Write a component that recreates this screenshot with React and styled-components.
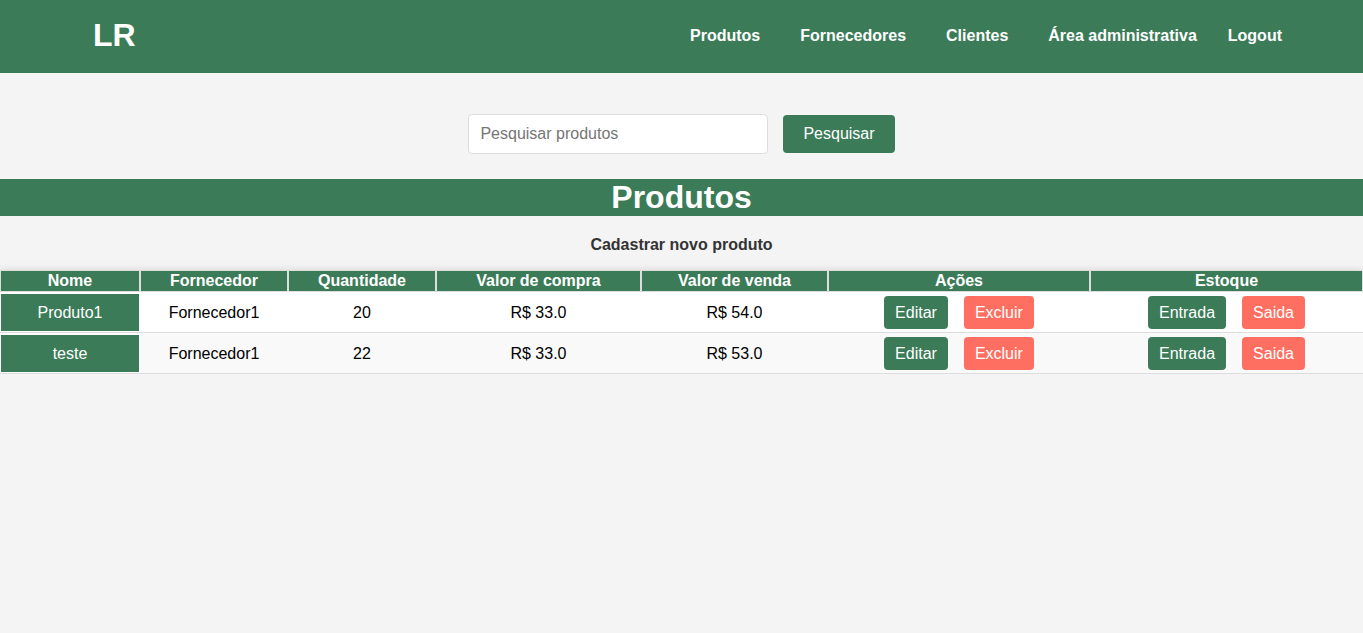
import styled, { createGlobalStyle } from "styled-components";

const GREEN = "#3b7b58";
const RED = "#ff6f61";

const GlobalStyle = createGlobalStyle`
  html, body {
    margin: 0;
    padding: 0;
    background: #f4f4f4;
    font-family: "Liberation Sans", Arial, sans-serif;
  }
`;

const Header = styled.header`
  background: ${GREEN};
  height: 73px;
  display: flex;
  align-items: center;
  justify-content: space-between;
  padding: 0 71px 0 93px;
  box-sizing: border-box;
`;

const Logo = styled.div`
  color: #fff;
  font-size: 32px;
  font-weight: bold;
  margin-top: -3px;
`;

const Nav = styled.nav`
  display: flex;
  align-items: center;
  margin-top: -1px;
`;

const NavLink = styled.a`
  color: #fff;
  font-size: 16px;
  font-weight: bold;
  text-decoration: none;
  margin-left: 40px;
  cursor: pointer;
`;

const LogoutButton = styled.button`
  background: none;
  border: none;
  color: #fff;
  font-family: inherit;
  font-size: 16px;
  font-weight: bold;
  padding: 0 10px;
  margin-left: 21px;
  cursor: pointer;
`;

const SearchForm = styled.form`
  display: flex;
  justify-content: center;
  align-items: center;
  gap: 15px;
  padding: 41px 0 25px;
`;

const SearchInput = styled.input`
  width: 300px;
  height: 40px;
  box-sizing: border-box;
  border: 1px solid #ddd;
  border-radius: 4px;
  padding: 0 11px;
  font-family: inherit;
  font-size: 16px;
  background: #fff;
  &::placeholder {
    color: #757575;
  }
`;

const Button = styled.button`
  background: ${(p) => (p.$danger ? RED : GREEN)};
  color: #fff;
  border: none;
  border-radius: 4px;
  font-family: inherit;
  font-size: 16px;
  cursor: pointer;
  height: ${(p) => (p.$large ? "38px" : "33px")};
  padding: ${(p) => (p.$large ? "0 20px" : "0 11px")};
  margin: ${(p) => (p.$large ? "0" : "0 8px")};
`;

const TitleBar = styled.h1`
  background: ${GREEN};
  color: #fff;
  margin: 0;
  height: 37px;
  line-height: 37px;
  font-size: 32px;
  text-align: center;
`;

const NewLink = styled.a`
  display: block;
  text-align: center;
  color: #333;
  font-weight: bold;
  font-size: 16px;
  text-decoration: none;
  margin: 20px 0 16px;
  cursor: pointer;
`;

const Table = styled.table`
  width: 100%;
  table-layout: fixed;
  border-collapse: separate;
  border-spacing: 0;
  background: #fff;
  box-shadow: 0 0 8px rgba(0, 0, 0, 0.12);
`;

const Th = styled.th`
  background: ${GREEN};
  color: #fff;
  font-size: 16px;
  font-weight: bold;
  border: 1px solid #ddd;
  padding: 0;
  height: 20px;
  line-height: 20px;
`;

const Tr = styled.tr`
  background: ${(p) => (p.$alt ? "#f9f9f9" : "#fff")};
`;

const Td = styled.td`
  text-align: center;
  font-size: 16px;
  color: #000;
  padding: 3px 0;
  height: 33px;
  border-top: 1px solid transparent;
  border-bottom: 1px solid #ddd;
`;

const NameTd = styled(Td)`
  background: ${GREEN};
  color: #fff;
  box-shadow: inset 0 0 0 1px #fff;
  border-top-color: #fff;
`;

const produtos = [
  { nome: "Produto1", fornecedor: "Fornecedor1", qtd: 20, compra: "R$ 33.0", venda: "R$ 54.0" },
  { nome: "teste", fornecedor: "Fornecedor1", qtd: 22, compra: "R$ 33.0", venda: "R$ 53.0" },
];

export default function App() {
  return (
    <>
      <GlobalStyle />
      <Header>
        <Logo>LR</Logo>
        <Nav>
          <NavLink>Produtos</NavLink>
          <NavLink>Fornecedores</NavLink>
          <NavLink>Clientes</NavLink>
          <NavLink>Área administrativa</NavLink>
          <LogoutButton>Logout</LogoutButton>
        </Nav>
      </Header>

      <SearchForm onSubmit={(e) => e.preventDefault()}>
        <SearchInput placeholder="Pesquisar produtos" />
        <Button $large>Pesquisar</Button>
      </SearchForm>

      <TitleBar>Produtos</TitleBar>
      <NewLink>Cadastrar novo produto</NewLink>

      <Table>
        <thead>
          <tr>
            <Th style={{ width: 138 }}>Nome</Th>
            <Th style={{ width: 146 }}>Fornecedor</Th>
            <Th style={{ width: 146 }}>Quantidade</Th>
            <Th style={{ width: 203 }}>Valor de compra</Th>
            <Th style={{ width: 185 }}>Valor de venda</Th>
            <Th style={{ width: 260 }}>Ações</Th>
            <Th>Estoque</Th>
          </tr>
        </thead>
        <tbody>
          {produtos.map((p, i) => (
            <Tr key={p.nome} $alt={i % 2 === 1}>
              <NameTd>{p.nome}</NameTd>
              <Td>{p.fornecedor}</Td>
              <Td>{p.qtd}</Td>
              <Td>{p.compra}</Td>
              <Td>{p.venda}</Td>
              <Td>
                <Button>Editar</Button>
                <Button $danger>Excluir</Button>
              </Td>
              <Td>
                <Button>Entrada</Button>
                <Button $danger>Saida</Button>
              </Td>
            </Tr>
          ))}
        </tbody>
      </Table>
    </>
  );
}
